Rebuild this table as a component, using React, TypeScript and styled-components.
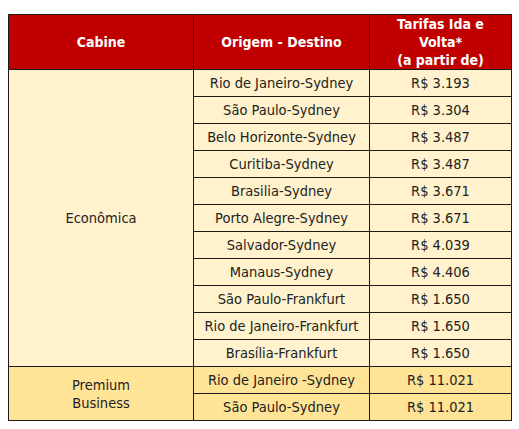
import React from 'react';
import styled, { createGlobalStyle } from 'styled-components';

const GlobalStyle = createGlobalStyle`
  html, body {
    margin: 0;
    padding: 0;
    background: #fff;
  }
  body {
    font-family: "DejaVu Sans Condensed", "DejaVu Sans", sans-serif;
  }
`;

const Page = styled.div`
  padding: 14px 0 0 8px;
`;

const Table = styled.table`
  border-collapse: collapse;
  table-layout: fixed;
  width: 503px;
  font-size: 14.5px;
  color: #222;
`;

const HeadCell = styled.th`
  background: #c00000;
  color: #fff;
  font-size: 14px;
  font-weight: bold;
  height: 54px;
  padding: 0 4px;
  border: 1px solid #1a1a1a;
  text-align: center;
  line-height: 18px;
`;

const Cell = styled.td<{ $premium?: boolean }>`
  background: ${(p) => (p.$premium ? '#ffe497' : '#fff2cc')};
  border: 1px solid #1a1a1a;
  height: 26px;
  padding: 0 4px;
  text-align: center;
  line-height: 18px;
`;

const economica: [string, string][] = [
  ['Rio de Janeiro-Sydney', 'R$ 3.193'],
  ['São Paulo-Sydney', 'R$ 3.304'],
  ['Belo Horizonte-Sydney', 'R$ 3.487'],
  ['Curitiba-Sydney', 'R$ 3.487'],
  ['Brasilia-Sydney', 'R$ 3.671'],
  ['Porto Alegre-Sydney', 'R$ 3.671'],
  ['Salvador-Sydney', 'R$ 4.039'],
  ['Manaus-Sydney', 'R$ 4.406'],
  ['São Paulo-Frankfurt', 'R$ 1.650'],
  ['Rio de Janeiro-Frankfurt', 'R$ 1.650'],
  ['Brasília-Frankfurt', 'R$ 1.650'],
];

const premium: [string, string][] = [
  ['Rio de Janeiro -Sydney', 'R$ 11.021'],
  ['São Paulo-Sydney', 'R$ 11.021'],
];

export default function App() {
  return (
    <>
      <GlobalStyle />
      <Page>
        <Table>
          <colgroup>
            <col style={{ width: 185 }} />
            <col style={{ width: 176 }} />
            <col style={{ width: 142 }} />
          </colgroup>
          <thead>
            <tr>
              <HeadCell>Cabine</HeadCell>
              <HeadCell>Origem - Destino</HeadCell>
              <HeadCell>
                Tarifas Ida e<br />
                Volta*<br />
                (a partir de)
              </HeadCell>
            </tr>
          </thead>
          <tbody>
            {economica.map(([route, price], i) => (
              <tr key={route}>
                {i === 0 && <Cell rowSpan={economica.length}>Econômica</Cell>}
                <Cell>{route}</Cell>
                <Cell>{price}</Cell>
              </tr>
            ))}
            {premium.map(([route, price], i) => (
              <tr key={route + i}>
                {i === 0 && (
                  <Cell $premium rowSpan={premium.length}>
                    Premium
                    <br />
                    Business
                  </Cell>
                )}
                <Cell $premium>{route}</Cell>
                <Cell $premium>{price}</Cell>
              </tr>
            ))}
          </tbody>
        </Table>
      </Page>
    </>
  );
}
